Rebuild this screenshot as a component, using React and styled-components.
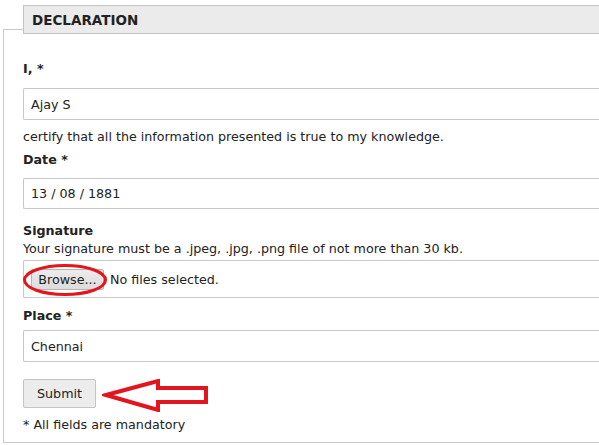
import React from "react";
import styled, { createGlobalStyle } from "styled-components";

const GlobalStyle = createGlobalStyle`
  html, body {
    margin: 0;
    padding: 0;
    background: #fff;
  }
  body {
    font-family: "DejaVu Sans", Verdana, sans-serif;
    font-size: 12.7px;
    color: #222;
    overflow: hidden;
  }
`;

const Frame = styled.div`
  margin: 29px 0 0 3px;
  width: 596px;
  height: 414px;
  border: 1px solid #c8c8c8;
  border-right: none;
  box-sizing: border-box;
  padding: 0 0 0 19px;
`;

const Legend = styled.div`
  margin-top: -25px;
  height: 27px;
  border: 1px solid #c4c4c4;
  border-right: none;
  background: #ebebeb;
  display: flex;
  align-items: center;
  padding-left: 8px;
  font-weight: bold;
  font-size: 13.5px;
  color: #222;
`;

const Label = styled.div`
  font-weight: bold;
  line-height: 16px;
  margin-top: ${p => p.top || 0}px;
`;

const Text = styled.div`
  line-height: 16px;
  margin-top: ${p => p.top || 0}px;
`;

const Input = styled.div`
  margin-top: ${p => p.top || 0}px;
  height: ${p => p.h || 32}px;
  box-sizing: border-box;
  border: 1px solid #c8c8c8;
  border-right: none;
  border-radius: 2px 0 0 2px;
  display: flex;
  align-items: center;
  padding-left: 7px;
  gap: 6px;
`;

const BrowseWrap = styled.span`
  position: relative;
  display: inline-flex;
`;

const BrowseButton = styled.button`
  font: inherit;
  color: #222;
  height: 21px;
  width: 73px;
  padding: 0;
  border: 1px solid #b4b4b4;
  border-radius: 2px;
  background: linear-gradient(#ececec, #dcdcdc);
`;

const Ellipse = styled.svg`
  position: absolute;
  left: -9px;
  top: -6px;
  pointer-events: none;
`;

const SubmitRow = styled.div`
  margin-top: 17px;
  display: flex;
  align-items: flex-start;
  gap: 6px;
`;

const SubmitButton = styled.button`
  font: inherit;
  color: #222;
  width: 73px;
  height: 29px;
  padding: 0;
  border: 1px solid #c4c4c4;
  border-radius: 2px;
  background: #ececec;
`;

export default function App() {
  return (
    <>
      <GlobalStyle />
      <Frame>
        <Legend>DECLARATION</Legend>
        <Label top={27}>I, *</Label>
        <Input top={11}>Ajay S</Input>
        <Text top={9}>certify that all the information presented is true to my knowledge.</Text>
        <Label top={7}>Date *</Label>
        <Input top={10} h={31}>13 / 08 / 1881</Input>
        <Label top={14}>Signature</Label>
        <Text top={2}>Your signature must be a .jpeg, .jpg, .png file of not more than 30 kb.</Text>
        <Input top={3} h={38}>
          <BrowseWrap>
            <BrowseButton>Browse...</BrowseButton>
            <Ellipse width="86" height="34" viewBox="0 0 86 34">
              <ellipse cx="43" cy="17" rx="40.5" ry="14.5" fill="none" stroke="#e3151d" strokeWidth="3" />
            </Ellipse>
          </BrowseWrap>
          <span>No files selected.</span>
        </Input>
        <Label top={10}>Place *</Label>
        <Input top={6}>Chennai</Input>
        <SubmitRow>
          <SubmitButton>Submit</SubmitButton>
          <svg width="108" height="33" viewBox="0 0 108 33">
            <polygon
              points="4,16 56,2 56,9 104,9 104,23 56,23 56,31"
              fill="#fff"
              stroke="#e3151d"
              strokeWidth="4"
              strokeLinejoin="miter"
            />
          </svg>
        </SubmitRow>
        <Text top={5}>* All fields are mandatory</Text>
      </Frame>
    </>
  );
}
